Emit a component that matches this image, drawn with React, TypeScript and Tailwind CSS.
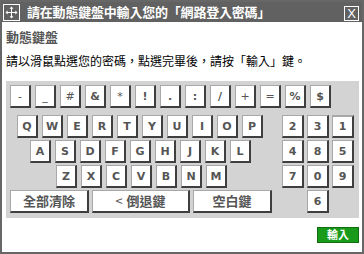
import React from 'react';

const font = 'font-["Liberation_Sans","Noto_Sans_CJK_TC",sans-serif]';

const keyBase =
  'h-[23px] flex items-center justify-center bg-white border-l border-t border-l-[#a8a8a8] border-t-[#a8a8a8] border-r-2 border-b-2 border-r-[#3f3f3f] border-b-[#3f3f3f] text-[#555] select-none';

const Key = ({ label, wide, pressed, light }: { label: string; wide?: string; pressed?: boolean; light?: boolean }) => (
  <div
    className={`${keyBase} ${wide ?? 'w-[21px]'} ${pressed ? 'border-t-2 border-t-[#3f3f3f]' : ''} ${
      light ? 'font-normal' : 'font-bold'
    } font-["DejaVu_Sans",sans-serif] text-[11px] leading-none`}
  >
    {label}
  </div>
);

const symbols = [
  { k: '-', l: true },
  { k: '_', l: true },
  { k: '#', l: true },
  { k: '&', l: false },
  { k: '*', l: true },
  { k: '!', l: false },
  { k: '.', l: false },
  { k: ':', l: false },
  { k: '/', l: false },
  { k: '+', l: true },
  { k: '=', l: true },
  { k: '%', l: false },
  { k: '$', l: false },
];

const numpad = ['2', '3', '1', '4', '8', '5', '7', '0', '9', '', '6', ''];

export default function App() {
  return (
    <div className={`w-[364px] h-[254px] border-2 border-[#676767] bg-white flex flex-col ${font}`}>
      <div className="h-[20px] bg-[#616161] flex items-center pl-[1px] pr-[3px]">
        <svg width="17" height="17" viewBox="0 0 17 17" className="shrink-0">
          <rect x="0.5" y="0.5" width="16" height="16" fill="none" stroke="#fff" />
          <path d="M8.5 3v11M3 8.5h11" stroke="#fff" strokeWidth="1" />
          <path d="M8.5 2.5l-2 2.2h4zM8.5 14.5l-2-2.2h4zM2.5 8.5l2.2-2v4zM14.5 8.5l-2.2-2v4z" fill="#fff" />
        </svg>
        <span className="ml-[7px] text-white font-bold text-[13px] leading-none tracking-[-0.2px]">
          請在動態鍵盤中輸入您的「網路登入密碼」
        </span>
        <div className="ml-auto mt-[2px] w-[15px] h-[15px] border border-white flex items-center justify-center text-white text-[13px] leading-none">
          X
        </div>
      </div>

      <div className="mt-[9px] ml-[4px] text-[13px] leading-[14px] font-bold text-[#555]">動態鍵盤</div>
      <div className="mt-[10px] ml-[4px] text-[12px] leading-[14px] text-black">
        請以滑鼠點選您的密碼，點選完畢後，請按「輸入」鍵。
      </div>

      <div className="mt-[12px] ml-[4px] w-[353px] bg-[#d3d3d3] pt-[4px] pb-[5px] pl-[4px]">
        <div className="flex gap-[4px]">
          {symbols.map((s) => (
            <Key key={s.k} label={s.k} light={s.l} wide="w-[21px]" />
          ))}
        </div>

        <div className="flex mt-[7px]">
          <div className="w-[272px] flex flex-col gap-[2px]">
            <div className="flex gap-[4px] ml-[7px]">
              {'QWERTYUIOP'.split('').map((c) => (
                <Key key={c} label={c} />
              ))}
            </div>
            <div className="flex gap-[4px] ml-[20px]">
              {'ASDFGHJKL'.split('').map((c) => (
                <Key key={c} label={c} />
              ))}
            </div>
            <div className="flex gap-[4px] ml-[46px]">
              {'ZXCVBNM'.split('').map((c) => (
                <Key key={c} label={c} />
              ))}
            </div>
            <div className="flex gap-[3px] font-['Noto_Sans_CJK_TC',sans-serif]">
              <div className={`${keyBase} w-[79px] text-[13px] font-bold text-[#333]`}>全部清除</div>
              <div className={`${keyBase} w-[98px] text-[13px] font-bold text-[#333]`}>
                <span className="font-normal mr-[4px]">&lt;</span>倒退鍵
              </div>
              <div className={`${keyBase} w-[79px] text-[13px] font-bold text-[#333]`}>空白鍵</div>
            </div>
          </div>
          <div className="grid grid-cols-[22px_22px_22px] gap-x-[3px] gap-y-[2px]">
            {numpad.map((n, i) =>
              n === '' ? (
                <div key={i} />
              ) : (
                <Key key={i} label={n} wide="w-[22px]" pressed={n === '1'} />
              )
            )}
          </div>
        </div>
      </div>

      <div className="flex-1 flex items-center justify-end pr-[3px]">
        <div className="w-[42px] h-[16px] bg-[#1a9a1a] border border-[#0f6f0f] flex items-center justify-center text-white font-bold text-[11px] leading-none">
          輸入
        </div>
      </div>
    </div>
  );
}
